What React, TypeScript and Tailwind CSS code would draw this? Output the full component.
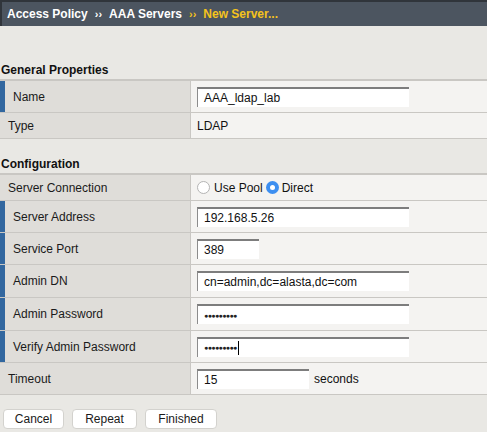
import React from 'react';

interface RowProps {
  label: string;
  required?: boolean;
  height?: string;
  children: React.ReactNode;
}

const Row: React.FC<RowProps> = ({ label, required = false, height = 'h-[32px]', children }) => (
  <div className={`flex border-b border-[#c9c7c3] ${height}`}>
    <div className="flex w-[191px] shrink-0 items-center border-r border-[#c9c7c3] bg-[#dfddd9]">
      {required && <div className="h-full w-[5px] bg-[#32679f]" />}
      <span className="pl-[8px] text-[12px] text-[#1a1a1a]">{label}</span>
    </div>
    <div className="flex flex-1 items-center bg-[#f4f3f1] pl-[6px]">{children}</div>
  </div>
);

const TextBox: React.FC<{ value: string; width: string; password?: boolean; caret?: boolean }> = ({
  value,
  width,
  password = false,
  caret = false
}) => (
  <div
    className={`flex h-[20px] items-center border-t-2 border-l border-t-[#7d7d7d] border-l-[#8c8c8c] bg-white pl-[6px] text-[12px] text-[#111] ${width}`}
  >
    {password ? (
      <span className="text-[7px] leading-none tracking-[-0.6px] text-[#222]">●●●●●●●●●</span>
    ) : (
      value
    )}
    {caret && <span className="ml-[1px] h-[14px] w-[1px] bg-black" />}
  </div>
);

const Radio: React.FC<{ checked?: boolean }> = ({ checked = false }) =>
  checked ? (
    <span className="flex h-[13px] w-[13px] items-center justify-center rounded-full bg-[#3d8ff0]">
      <span className="h-[5px] w-[5px] rounded-full bg-white" />
    </span>
  ) : (
    <span className="h-[13px] w-[13px] rounded-full border border-[#b4b4b4] bg-white" />
  );

const Button: React.FC<{ label: string; width: string }> = ({ label, width }) => (
  <button
    className={`h-[20px] rounded-[4px] border border-[#d3d2ce] bg-white text-[12px] leading-[18px] text-[#1a1a1a] ${width}`}
  >
    {label}
  </button>
);

export default function App() {
  return (
    <div className="h-[432px] w-[487px] overflow-hidden bg-[#e9e8e4] font-['Liberation_Sans',Arial,sans-serif]">
      {/* Breadcrumb bar */}
      <div className="flex h-[26px] items-center border-t-2 border-l-2 border-[#30353b] bg-[#4c5560] pl-[5px] text-[12px] font-bold text-white">
        <span>Access Policy</span>
        <span className="mx-[7px] text-[11px]">››</span>
        <span>AAA Servers</span>
        <span className="mx-[7px] text-[11px] text-[#f5c31c]">››</span>
        <span className="text-[#f5c31c]">New Server...</span>
      </div>

      {/* General Properties */}
      <div className="pt-[36px] pl-[1px] text-[12px] leading-[16px] font-bold text-[#111]">General Properties</div>
      <div className="mt-[1px] border-t-2 border-[#c9c7c3]">
        <Row label="Name" required>
          <TextBox value="AAA_ldap_lab" width="w-[212px]" />
        </Row>
        <Row label="Type" height="h-[26px]">
          <span className="text-[12px] text-[#111]">LDAP</span>
        </Row>
      </div>

      {/* Configuration */}
      <div className="pt-[17px] pl-[1px] text-[12px] leading-[16px] font-bold text-[#111]">Configuration</div>
      <div className="mt-[1px] border-t-2 border-[#c9c7c3]">
        <Row label="Server Connection" height="h-[26px]">
          <div className="flex items-center text-[12px] text-[#111]">
            <Radio />
            <span className="ml-[4px] mr-[3px]">Use Pool</span>
            <Radio checked />
            <span className="ml-[3px]">Direct</span>
          </div>
        </Row>
        <Row label="Server Address" required>
          <TextBox value="192.168.5.26" width="w-[212px]" />
        </Row>
        <Row label="Service Port" required>
          <TextBox value="389" width="w-[62px]" />
        </Row>
        <Row label="Admin DN" required height="h-[33px]">
          <TextBox value="cn=admin,dc=alasta,dc=com" width="w-[212px]" />
        </Row>
        <Row label="Admin Password" required height="h-[33px]">
          <TextBox value="" width="w-[212px]" password />
        </Row>
        <Row label="Verify Admin Password" required>
          <TextBox value="" width="w-[212px]" password caret />
        </Row>
        <Row label="Timeout">
          <TextBox value="15" width="w-[112px]" />
          <span className="ml-[5px] text-[12px] text-[#111]">seconds</span>
        </Row>
      </div>

      {/* Actions */}
      <div className="flex gap-[8px] pt-[14px] pl-[3px]">
        <Button label="Cancel" width="w-[61px]" />
        <Button label="Repeat" width="w-[65px]" />
        <Button label="Finished" width="w-[72px]" />
      </div>
    </div>
  );
}
